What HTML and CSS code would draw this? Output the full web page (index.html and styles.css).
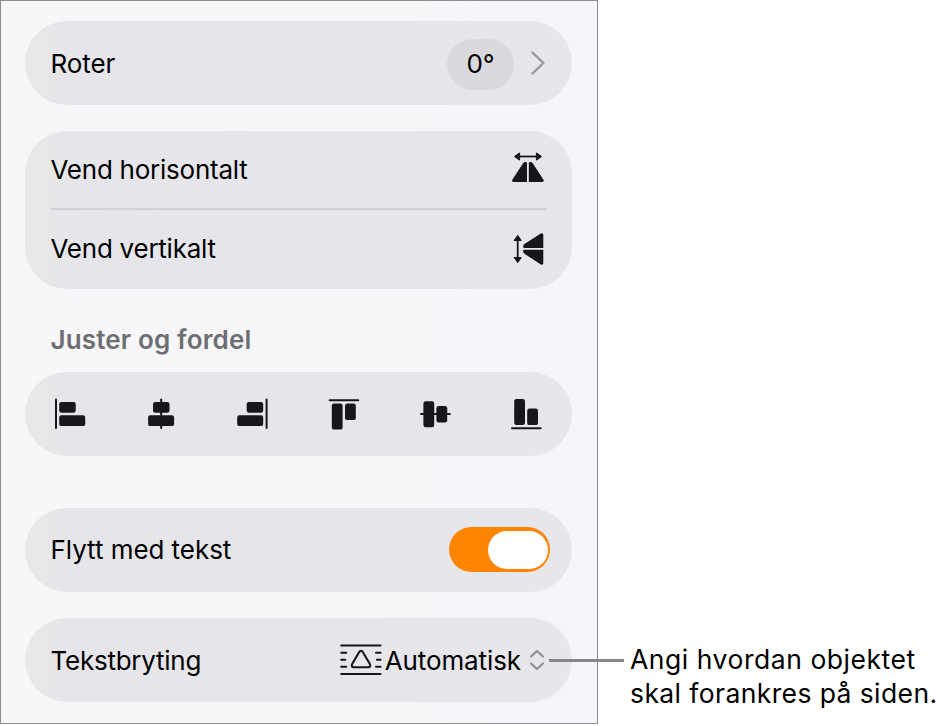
FILE: index.html
```
<!DOCTYPE html>
<html lang="nb">
<head>
    <meta charset="UTF-8">
    <meta name="viewport" content="width=device-width, initial-scale=1.0">
    <title>Ordne</title>
    <link rel="stylesheet" href="styles.css">
</head>
<body>

<div class="page">
    <main class="panel">
        <section class="card row rotate">
            <span class="label label-rotate">Roter</span>
            <span class="angle">0°</span>
            <svg class="chevron" width="16" height="26" viewBox="0 0 16 26">
                <path d="M2.4 2.5 L13.4 13 L2.4 23.5"/>
            </svg>
        </section>

        <section class="card flip">
            <div class="row">
                <span class="label label-horizontal">Vend horisontalt</span>
                <svg class="icon" width="32" height="32" viewBox="0 0 32 32">
                    <path class="line" d="M6 5.5 H26"/>
                    <path d="M2.8 5.5 L7.4 2.3 V8.7 Z M29.2 5.5 L24.6 2.3 V8.7 Z" class="head"/>
                    <path d="M15 12 V31 H1.6 Q-.5 30.6 .4 28.5 L11.1 12.2 Q11.9 11 13.7 11 Q15 11 15 12 Z"/>
                    <path d="M16.8 12 V31 H30.2 Q32.3 30.6 31.4 28.5 L20.7 12.2 Q19.9 11 18.1 11 Q16.8 11 16.8 12 Z"/>
                </svg>
            </div>
            <hr>
            <div class="row">
                <span class="label label-vertical">Vend vertikalt</span>
                <svg class="icon" width="32" height="32" viewBox="0 0 32 32">
                    <path class="line" d="M5.7 6 V26"/>
                    <path d="M5.7 2.8 L2.5 7.4 H8.9 Z M5.7 29.2 L2.5 24.6 H8.9 Z" class="head"/>
                    <path d="M12.2 15 H31.3 V1.6 Q30.9 -.5 28.8 .4 L12.4 11.1 Q11.1 11.9 11.1 13.7 Q11.1 15 12.2 15 Z"/>
                    <path d="M12.2 16.8 H31.3 V30.2 Q30.9 32.3 28.8 31.4 L12.4 20.7 Q11.1 19.9 11.1 18.1 Q11.1 16.8 12.2 16.8 Z"/>
                </svg>
            </div>
        </section>

        <h2>Juster og fordel</h2>

        <section class="card align">
            <svg class="icon" width="31" height="32" viewBox="0 0 31 32">
                <rect x="0" y="0.5" width="2" height="30.4" rx="1"/>
                <rect x="4.2" y="4" width="16.5" height="10.8" rx="2.2"/>
                <rect x="4.2" y="17.2" width="26" height="10.9" rx="2.2"/>
            </svg>
            <svg class="icon" width="31" height="32" viewBox="0 0 31 32">
                <rect x="14.2" y="0.5" width="2" height="30.4" rx="1"/>
                <rect x="7" y="4" width="16.5" height="10.8" rx="2.2"/>
                <rect x="2.1" y="17.2" width="26" height="10.9" rx="2.2"/>
            </svg>
            <svg class="icon" width="31" height="32" viewBox="0 0 31 32">
                <rect x="28.6" y="0.5" width="2" height="30.4" rx="1"/>
                <rect x="9.7" y="4" width="16.5" height="10.8" rx="2.2"/>
                <rect x="0.2" y="17.2" width="26" height="10.9" rx="2.2"/>
            </svg>
            <svg class="icon" width="31" height="32" viewBox="0 0 31 32">
                <rect x="-0.4" y="1.3" width="30.6" height="2" rx="1"/>
                <rect x="2.8" y="5.6" width="10.8" height="26" rx="2.2"/>
                <rect x="16" y="5.6" width="10.8" height="16.5" rx="2.2"/>
            </svg>
            <svg class="icon" width="31" height="32" viewBox="0 0 31 32">
                <rect x="0" y="15" width="30.8" height="2" rx="1"/>
                <rect x="3.4" y="3.2" width="10.8" height="26" rx="2.2"/>
                <rect x="16.4" y="8" width="10.8" height="16.5" rx="2.2"/>
            </svg>
            <svg class="icon" width="31" height="32" viewBox="0 0 31 32">
                <rect x="0" y="29.3" width="30.6" height="2" rx="1"/>
                <rect x="3.2" y="1" width="10.8" height="26" rx="2.2"/>
                <rect x="16.2" y="10.6" width="10.8" height="16.5" rx="2.2"/>
            </svg>
        </section>

        <section class="card row move">
            <span class="label label-move">Flytt med tekst</span>
            <span class="toggle"><span class="knob"></span></span>
        </section>

        <section class="card row wrap">
            <span class="label label-wrap">Tekstbryting</span>
            <svg class="wrap-icon" width="42" height="32" viewBox="0 0 42 32">
                <path d="M1.2 1.5 H40.5 M1.2 30 H40.5"/>
                <path d="M1.2 8.7 H6.2 M1.2 15.7 H5.2 M1.2 22.8 H6.2 M36 8.7 H40.6 M37 15.7 H40.6 M36 22.8 H40.6"/>
                <path d="M19.2 8 Q21 5.6 22.8 8 L30 20.3 Q30.8 23 28.4 23.2 H13.6 Q11.2 23 12 20.3 Z"/>
            </svg>
            <span class="value">Automatisk</span>
            <svg class="stepper" width="16" height="22" viewBox="0 0 16 22">
                <path d="M2 7.5 L8 2 L14 7.5 M2 14.5 L8 20 L14 14.5"/>
            </svg>
        </section>
    </main>

    <aside class="callout">
        <div class="callout-line"></div>
        <p><span class="first">Angi hvordan objektet</span><br><span class="second">skal forankres på siden.</span></p>
    </aside>
</div>

</body>
</html>
```
FILE: styles.css
```
body {
    margin: 0;
    background-color: #fff;
    color: #000;
    font-family: Inter, "Liberation Sans", sans-serif;
    font-size: 26px;
    line-height: 34px;
}
.page {
    display: flex;
    height: 726px;
    overflow: hidden;
}
.panel {
    box-sizing: border-box;
    flex: none;
    width: 598px;
    height: 724px;
    padding: 20px 25px 0 24px;
    border: 1px solid #8e8e90;
    background: linear-gradient(to right, #f7f7f9 68%, #f6f5fb 82%);
}
.card {
    box-sizing: border-box;
    height: 84px;
    border-radius: 42px;
    background: linear-gradient(to right, #e7e8e9 0, #e6e5ea 12%, #e7e6eb 100%);
}
.row {
    display: flex;
    align-items: center;
    padding-left: 25.5px;
}
.label {
    margin-right: auto;
    letter-spacing: -0.25px;
    white-space: nowrap;
}
.rotate {
    padding-right: 26px;
}
.label-rotate {
    padding-top: 2px;
    letter-spacing: -0.1px;
}
.angle {
    width: 67px;
    height: 51px;
    margin: 2px 16px 0 0;
    border-radius: 25.5px;
    background-color: #dad9de;
    line-height: 49px;
    text-align: center;
}
.chevron {
    fill: none;
    stroke: #98979c;
    stroke-width: 2.4;
    stroke-linecap: round;
    stroke-linejoin: round;
}
.flip {
    height: 158px;
    margin-top: 26px;
}
.flip .row {
    height: 77px;
    padding-right: 28px;
}
.flip .row .icon {
    margin-bottom: 5px;
}
.flip .row:last-child {
    height: 77px;
}
.flip .row:last-child .icon {
    margin-bottom: 0;
}
hr {
    height: 2px;
    margin: 0 25px 0 26px;
    border: 0;
    background-color: #d1d0d5;
}
.icon {
    flex: none;
    overflow: visible;
    fill: #17161b;
}
.icon .line {
    stroke: #17161b;
    stroke-width: 1.8;
}
.icon .head {
    stroke: #17161b;
    stroke-width: 1.4;
    stroke-linejoin: round;
}
h2 {
    margin: 34px 0 15px 25.5px;
    color: #6e6e72;
    font-size: 26px;
    font-weight: 600;
    letter-spacing: 0.15px;
    line-height: 34px;
}
.align {
    display: flex;
    align-items: center;
    justify-content: space-between;
    padding: 0 30px 1px;
}
.move {
    margin-top: 52px;
    padding-right: 22px;
}
.label-move {
    letter-spacing: -0.05px;
}
.toggle {
    box-sizing: border-box;
    display: flex;
    justify-content: flex-end;
    width: 101px;
    height: 45px;
    margin-bottom: 1px;
    padding: 3.5px 2.5px;
    border-radius: 22.5px;
    background-color: #ff8500;
}
.knob {
    width: 60px;
    height: 38px;
    border-radius: 19px;
    background-color: #fff;
}
.wrap {
    margin-top: 26px;
    padding-right: 27px;
}
.label-wrap,
.value {
    padding-top: 1px;
}
.value {
    letter-spacing: -0.1px;
}
.wrap-icon {
    margin-right: 3px;
    fill: none;
    stroke: #17161b;
    stroke-width: 2.1;
    stroke-linecap: round;
    stroke-linejoin: round;
}
.stepper {
    margin-left: 8px;
    fill: none;
    stroke: #8b8a8f;
    stroke-width: 2;
    stroke-linecap: round;
    stroke-linejoin: round;
}
.callout {
    position: relative;
    padding: 642px 0 0 32px;
    font-size: 26.5px;
    white-space: nowrap;
}
.callout p {
    margin: 0;
}
.callout .first {
    letter-spacing: 0.54px;
}
.callout .second {
    letter-spacing: 0.4px;
}
/* leader line runs from the stepper out to the caption */
.callout-line {
    position: absolute;
    top: 658.5px;
    left: -49px;
    width: 75px;
    height: 3px;
    background-color: #868686;
}
```
